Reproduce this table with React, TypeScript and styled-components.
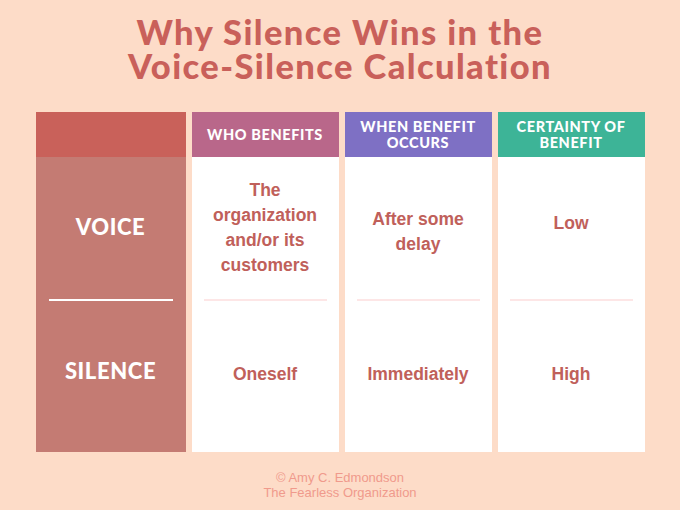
import React from "react";
import styled, { createGlobalStyle } from "styled-components";

const Global = createGlobalStyle`
  html, body { margin: 0; padding: 0; background: #FDDCC8; }
  body { width: 680px; height: 510px; overflow: hidden; }
`;

const Page = styled.div`
  width: 680px;
  height: 510px;
  box-sizing: border-box;
  background: #FDDCC8;
  display: flex;
  flex-direction: column;
  align-items: center;
  padding-top: 15px;
`;

const Title = styled.h1`
  margin: 0;
  font-family: Lato, "Open Sans", sans-serif;
  font-weight: 900;
  font-size: 34.5px;
  line-height: 34px;
  color: #C9605A;
  text-align: center;
  letter-spacing: 1.4px;
`;

const Table = styled.div`
  margin-top: 29px;
  display: grid;
  grid-template-columns: 150px 147px 147px 147px;
  column-gap: 6px;
  height: 340px;
`;

const Column = styled.div`
  display: flex;
  flex-direction: column;
`;

const Header = styled.div<{ $bg: string }>`
  height: 45px;
  background: ${(p) => p.$bg};
  display: flex;
  align-items: center;
  justify-content: center;
  text-align: center;
  font-family: Lato, "Open Sans", sans-serif;
  font-weight: 900;
  font-size: 14.5px;
  line-height: 16px;
  color: #ffffff;
  letter-spacing: 0.6px;
  padding: 0 4px;
`;

const Body = styled.div<{ $bg: string }>`
  flex: 1;
  background: ${(p) => p.$bg};
  display: flex;
  flex-direction: column;
`;

const Cell = styled.div<{ $h: number; $shift?: number }>`
  height: ${(p) => p.$h}px;
  display: flex;
  align-items: center;
  justify-content: center;
  text-align: center;
  padding: 0 14px;
  box-sizing: border-box;
  & > span {
    position: relative;
    top: ${(p) => p.$shift ?? 0}px;
  }
`;

const RowLabel = styled.span`
  font-family: Lato, "Open Sans", sans-serif;
  font-weight: 900;
  font-size: 22px;
  color: #ffffff;
  letter-spacing: 0.6px;
`;

const Value = styled.span`
  font-family: "Liberation Sans", Arial, sans-serif;
  font-weight: 700;
  font-size: 17.5px;
  line-height: 25px;
  color: #C0605A;
`;

const Divider = styled.div<{ $color: string; $inset: number }>`
  height: 2px;
  margin: 0 ${(p) => p.$inset}px;
  background: ${(p) => p.$color};
`;

const Footer = styled.div`
  margin-top: 18px;
  font-family: "Liberation Sans", Arial, sans-serif;
  font-size: 13px;
  line-height: 15px;
  color: #F09A8C;
  text-align: center;
`;

type Col = {
  header: React.ReactNode;
  color: string;
  top: React.ReactNode;
  topShift: number;
  bottom: string;
};

const columns: Col[] = [
  {
    header: "WHO BENEFITS",
    color: "#B9678A",
    top: (
      <>
        The
        <br />
        organization
        <br />
        and/or its
        <br />
        customers
      </>
    ),
    topShift: 0,
    bottom: "Oneself",
  },
  {
    header: (
      <>
        WHEN BENEFIT
        <br />
        OCCURS
      </>
    ),
    color: "#7E70C4",
    top: (
      <>
        After some
        <br />
        delay
      </>
    ),
    topShift: 4,
    bottom: "Immediately",
  },
  {
    header: (
      <>
        CERTAINTY OF
        <br />
        BENEFIT
      </>
    ),
    color: "#3DB497",
    top: "Low",
    topShift: -5,
    bottom: "High",
  },
];

export default function App() {
  return (
    <>
      <Global />
      <Page>
        <Title>
          Why Silence Wins in the
          <br />
          Voice-Silence Calculation
        </Title>
        <Table>
          <Column>
            <Header $bg="#C9615A" />
            <Body $bg="#C47B73">
              <Cell $h={142} $shift={-2}>
                <RowLabel>VOICE</RowLabel>
              </Cell>
              <Divider $color="#ffffff" $inset={13} />
              <Cell $h={146} $shift={-4}>
                <RowLabel>SILENCE</RowLabel>
              </Cell>
            </Body>
          </Column>
          {columns.map((c, i) => (
            <Column key={i}>
              <Header $bg={c.color}>{c.header}</Header>
              <Body $bg="#ffffff">
                <Cell $h={142} $shift={c.topShift}>
                  <Value>{c.top}</Value>
                </Cell>
                <Divider $color="#FDE6E6" $inset={12} />
                <Cell $h={146}>
                  <Value>{c.bottom}</Value>
                </Cell>
              </Body>
            </Column>
          ))}
        </Table>
        <Footer>
          © Amy C. Edmondson
          <br />
          The Fearless Organization
        </Footer>
      </Page>
    </>
  );
}
